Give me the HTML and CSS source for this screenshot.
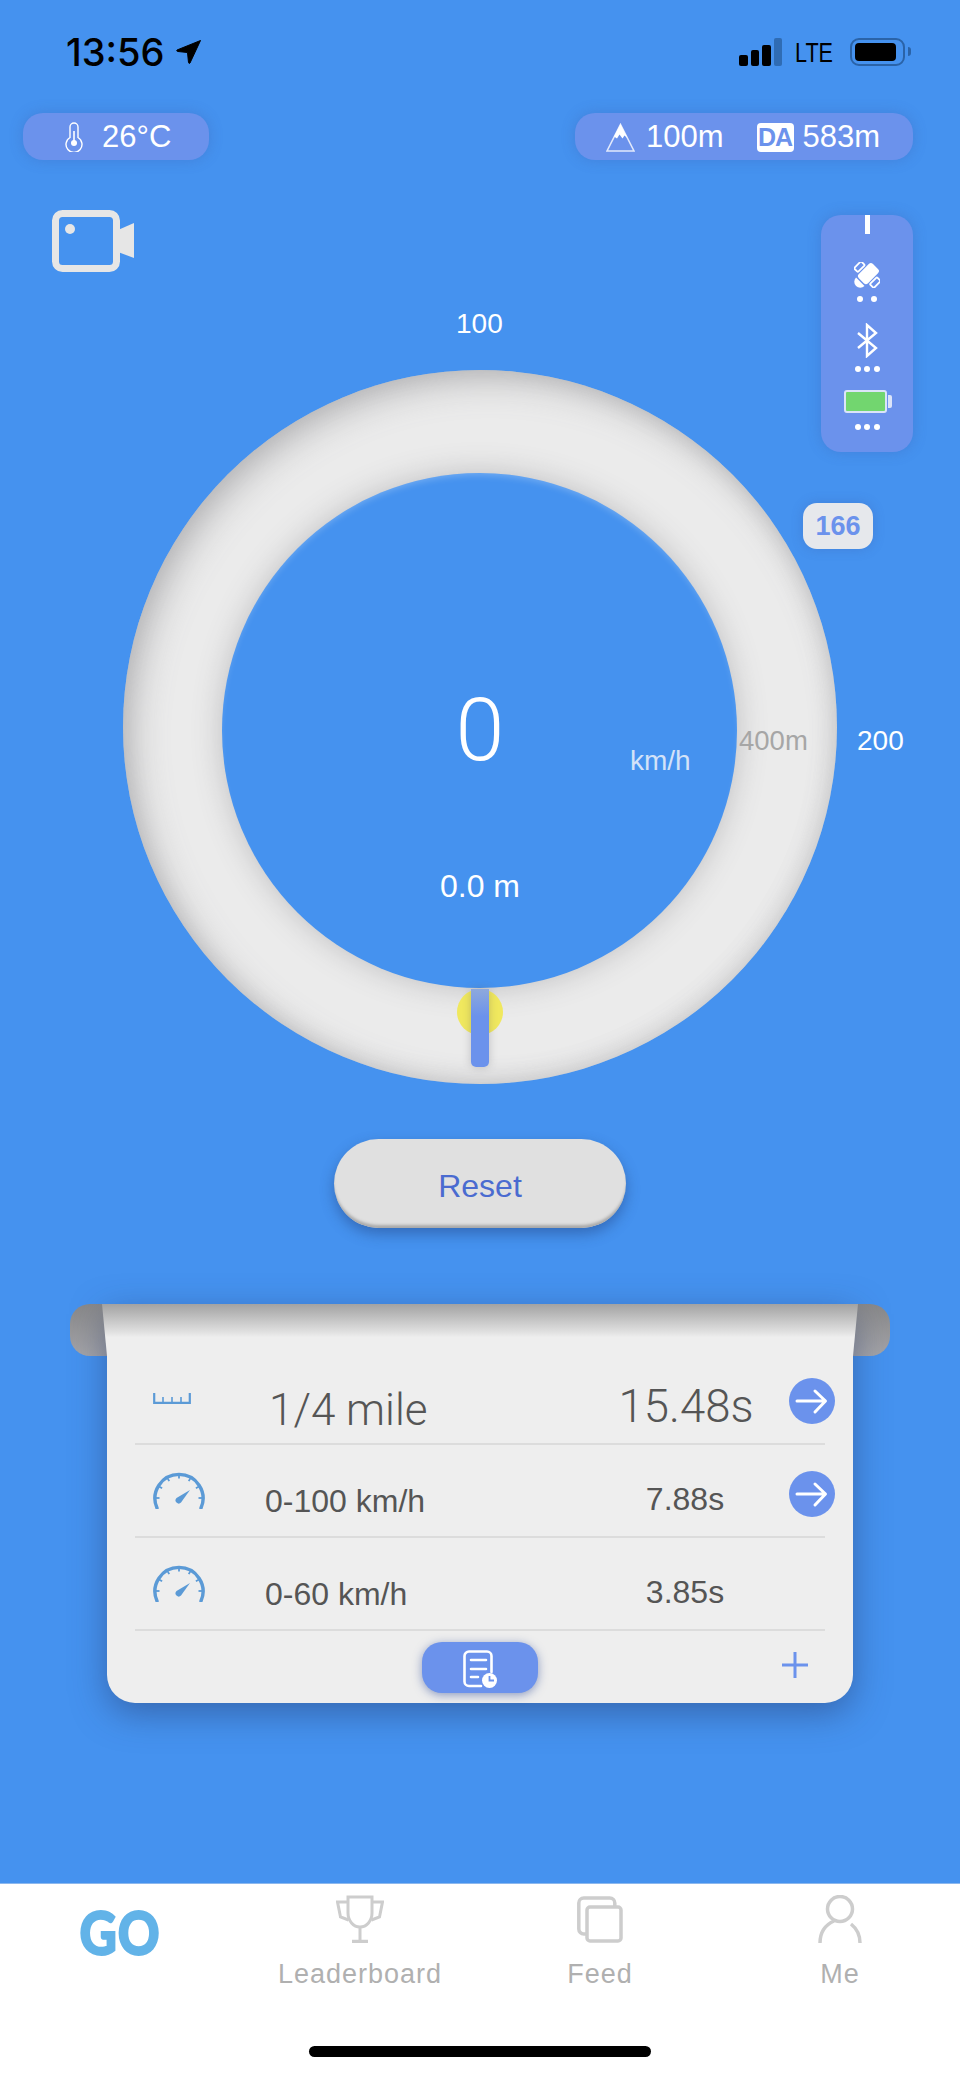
FILE: index.html
```html
<!DOCTYPE html>
<html lang="en">
<head>
    <meta charset="UTF-8">
    <meta name="viewport" content="width=device-width, initial-scale=1.0">
    <title>Dragy</title>
    <link rel="stylesheet" href="styles.css">
</head>
<body>
    <div class="screen">
        <!-- status bar -->
        <div class="status">
            <span class="time">13:56</span>
            <svg class="loc" viewBox="0 0 25 24"><path d="M24.5 .5 L1 10 Q0 11 2 11.5 L11.5 12.5 L12.5 22.5 Q13 24 14 23 Z" stroke="#000" stroke-width="1" stroke-linejoin="round"/></svg>
            <div class="status-right">
                <div class="signal">
                    <i class="bar-1"></i><i class="bar-2"></i><i class="bar-3"></i><i class="bar-4"></i>
                </div>
                <span class="lte">LTE</span>
                <div class="phone-batt"><div class="phone-batt-fill"></div></div>
                <div class="phone-batt-nub"></div>
            </div>
        </div>

        <!-- weather and altitude -->
        <div class="pills">
            <div class="pill pill-temp">
                <svg class="ico-temp" viewBox="0 0 18 30" fill="none" stroke="#fff" stroke-width="1.4"><path d="M5 15.5 V5 a4 4 0 0 1 8 0 V15.5 a8 8 0 1 1 -8 0 Z"/><path d="M9 9 V21" stroke-width="1.6"/><circle cx="9" cy="21" r="3" fill="#fff" stroke="none"/></svg>
                <span>26°C</span>
            </div>
            <div class="pill pill-alt">
                <svg class="ico-mount" viewBox="0 0 29 29"><path d="M14.5 1.5 L28 28 H1 Z" fill="none" stroke="#e2e9fb" stroke-width="1.6"/><path d="M14.5 1 L21.5 15 L18.5 12.5 L16.5 15.5 L13.5 11.5 L11 15.5 L8 13.5 Z" fill="#fff"/></svg>
                <span>100m</span>
                <span class="da">DA</span>
                <span class="da-value">583m</span>
            </div>
        </div>

        <!-- gauge -->
        <div class="stage">
            <svg class="camera" viewBox="0 0 82 62"><rect x="3.5" y="3.5" width="61" height="55" rx="7" fill="none" stroke="#e6e6e6" stroke-width="7"/><circle cx="18" cy="19" r="5" fill="#e6e6e6"/><path d="M66 20 L82 13 V48 L66 42 Z" fill="#e6e6e6"/></svg>

            <div class="sensors">
                <div class="sensor-tick"></div>
                <svg class="ico-sat" viewBox="0 0 26 26"><g transform="rotate(-45 13 13)"><rect x="5" y="6.5" width="20" height="13" rx="3" fill="#fff"/><rect x="8.5" y="-1" width="10" height="5.5" rx="1" fill="none" stroke="#fff" stroke-width="1.8"/><rect x="8.5" y="21.5" width="10" height="5.5" rx="1" fill="none" stroke="#fff" stroke-width="1.8"/><path d="M3.5 7 V19 A6 6 0 0 1 3.5 7 Z" fill="#fff"/></g></svg>
                <div class="dots dots-2"><i></i><i></i></div>
                <svg class="ico-bt" viewBox="0 0 21 35" fill="none" stroke="#fff" stroke-width="2.4"><path d="M1 10 L19 25 L10 33 V2 L19 10 L1 25"/></svg>
                <div class="dots dots-bt"><i></i><i></i><i></i></div>
                <div class="sensor-batt"></div>
                <div class="dots dots-batt"><i></i><i></i><i></i></div>
            </div>

            <div class="badge">166</div>
            <span class="tick tick-100">100</span>
            <span class="tick tick-200">200</span>

            <div class="ring">
                <div class="ring-hole"></div>
                <div class="dot"></div>
                <div class="needle"></div>
                <span class="speed">0</span>
                <span class="unit">km/h</span>
                <span class="dist">0.0 m</span>
                <span class="goal">400m</span>
            </div>
        </div>

        <button class="reset">Reset</button>

        <!-- results card -->
        <div class="card">
            <div class="flap flap-left"></div>
            <div class="flap flap-right"></div>
            <div class="fold"></div>

            <div class="row row-main">
                <svg class="ico-ruler" viewBox="0 0 38 11" fill="none" stroke="#5b9ad6"><path d="M1.2 0 V9.8 H36.8 V0" stroke-width="2.2"/><path d="M10 4 V9 M19 4 V9 M28 4 V9" stroke-width="1.6"/></svg>
                <div class="label">1/4 mile</div>
                <div class="value">15.48s</div>
                <div class="go-btn"><svg viewBox="0 0 46 46" fill="none" stroke="#fff" stroke-width="3" stroke-linecap="round" stroke-linejoin="round"><path d="M8 23 H36 M26 13 L36.5 23 L26 34"/></svg></div>
            </div>
            <div class="row">
                <svg class="ico-gauge" viewBox="0 0 52 37"><use href="#gauge"/></svg>
                <div class="label">0-100 km/h</div>
                <div class="value">7.88s</div>
                <div class="go-btn"><svg viewBox="0 0 46 46" fill="none" stroke="#fff" stroke-width="3" stroke-linecap="round" stroke-linejoin="round"><path d="M8 23 H36 M26 13 L36.5 23 L26 34"/></svg></div>
            </div>
            <div class="row">
                <svg class="ico-gauge" viewBox="0 0 52 37">
                    <g id="gauge" fill="none" stroke="#5b9ad6">
                        <path d="M4 36 A24 24 0 1 1 48 36" stroke-width="3.4" stroke-linecap="round"/>
                        <g stroke-width="1.8">
                            <path d="M26 3 V6.5" transform="rotate(-90 26 26)"/>
                            <path d="M26 3 V6.5" transform="rotate(-60 26 26)"/>
                            <path d="M26 3 V6.5" transform="rotate(-30 26 26)"/>
                            <path d="M26 3 V6.5"/>
                            <path d="M26 3 V6.5" transform="rotate(30 26 26)"/>
                            <path d="M26 3 V6.5" transform="rotate(60 26 26)"/>
                            <path d="M26 3 V6.5" transform="rotate(90 26 26)"/>
                        </g>
                        <path d="M37 18 L28 30.5 A3 3 0 0 1 23.5 26 Z" fill="#5b9ad6" stroke="none"/>
                    </g>
                </svg>
                <div class="label">0-60 km/h</div>
                <div class="value">3.85s</div>
            </div>

            <div class="card-foot">
                <button class="history">
                    <svg viewBox="0 0 34 38" fill="none" stroke="#fff" stroke-width="2.6" stroke-linecap="round"><path d="M18 36 H6 a4.5 4.5 0 0 1 -4.5 -4.5 V6 a4.5 4.5 0 0 1 4.5 -4.5 H24 a4.5 4.5 0 0 1 4.5 4.5 V22"/><path d="M8 10 H23 M8 19 H23 M8 27 H15"/><circle cx="26.5" cy="30.5" r="7.5" fill="#fff" stroke="none"/><path d="M26.5 26 V30.5 H31" stroke="#6b92ec" stroke-width="1.8" stroke-linecap="butt"/></svg>
                </button>
                <svg class="plus" viewBox="0 0 26 26" fill="none" stroke="#6b92ec" stroke-width="3"><path d="M13 0 V26 M0 13 H26"/></svg>
            </div>
        </div>

        <!-- tab bar -->
        <div class="tabbar">
            <div class="tabs">
                <div class="tab tab-go"><span class="go">GO</span></div>
                <div class="tab">
                    <svg viewBox="0 0 48 48" fill="none" stroke="#cdcdcd" stroke-width="3"><path d="M12 2 H36 V18 a12 14 0 0 1 -24 0 Z"/><path d="M12 7 H1.5 L4.5 22 L12.5 25 M36 7 H46.5 L43.5 22 L35.5 25"/><path d="M24 32 V46"/><path d="M16 46.5 H32" stroke-width="3.5"/></svg>
                    <span>Leaderboard</span>
                </div>
                <div class="tab">
                    <svg viewBox="0 0 46 48" fill="none" stroke="#cdcdcd" stroke-width="3.5"><rect x="1.8" y="3" width="36" height="36" rx="5"/><rect x="10" y="12" width="34" height="34" rx="3" fill="#fff"/></svg>
                    <span>Feed</span>
                </div>
                <div class="tab">
                    <svg viewBox="0 0 44 48" fill="none" stroke="#cdcdcd" stroke-width="3.5"><circle cx="22" cy="14" r="12.5"/><path d="M16 26 C7 30 2 38 2 48 M33 29 C38 33 42 40 42 48"/></svg>
                    <span>Me</span>
                </div>
            </div>
            <div class="home-bar"></div>
        </div>
    </div>
</body>
</html>
```

FILE: styles.css
```css
* {
    margin: 0;
    padding: 0;
    box-sizing: border-box;
}

body {
    font-family: "Liberation Sans", Arial, sans-serif;
    background: #4592ef;
}

.screen {
    width: 960px;
    height: 2076px;
    display: flex;
    flex-direction: column;
    background: #4592ef;
    color: #fff;
    overflow: hidden;
    isolation: isolate;
}

/* status bar */
.status {
    display: flex;
    align-items: flex-start;
    height: 66px;
    padding: 38px 49px 0 66px;
    color: #000;
}

.time {
    font-family: Inter, sans-serif;
    font-size: 38px;
    font-weight: 500;
    line-height: 28px;
}

.loc {
    width: 25px;
    height: 24px;
    margin: 2px 0 0 11px;
}

.status-right {
    display: flex;
    align-items: flex-start;
    margin-left: auto;
}

.signal {
    display: flex;
    align-items: flex-end;
    gap: 3px;
    height: 28px;
    margin-right: 13px;
}

.signal i {
    display: block;
    width: 8.5px;
    background: #000;
    border-radius: 2px;
}

.bar-1 { height: 11px; }
.bar-2 { height: 16px; }
.bar-3 { height: 21px; }
.signal .bar-4 { height: 28px; background: #2f6cb4; }

.lte {
    display: block;
    width: 41px;
    margin: 1px 14px 0 0;
    font-size: 27px;
    line-height: 28px;
    transform: scaleX(.8);
    transform-origin: left;
}

.phone-batt {
    width: 55px;
    height: 28px;
    border: 2px solid #2a63a8;
    border-radius: 9px;
    padding: 3px;
}

.phone-batt-fill {
    width: 41px;
    height: 18px;
    background: #000;
    border-radius: 4px;
}

.phone-batt-nub {
    width: 3px;
    height: 9px;
    margin: 9px 0 0 3px;
    background: #2a63a8;
    border-radius: 0 3px 3px 0;
}

/* pills */
.pills {
    display: flex;
    justify-content: space-between;
    margin-top: 47px;
    padding: 0 47px 0 23px;
}

.pill {
    display: flex;
    align-items: center;
    height: 47px;
    padding-top: 1px;
    background: #6b92ec;
    border-radius: 20px;
    box-shadow: 0 0 14px rgba(60, 90, 170, .3);
    font-size: 31px;
}

.pill-temp {
    width: 186px;
    padding-left: 42px;
    gap: 19px;
}

.pill-alt {
    width: 338px;
    padding-left: 31px;
}

.ico-temp {
    width: 18px;
    height: 30px;
}

.ico-mount {
    width: 29px;
    height: 29px;
    margin-right: 11px;
}

.da {
    width: 37px;
    height: 29px;
    margin-left: 33px;
    background: #fff;
    color: #6b92ec;
    border-radius: 4px;
    font-size: 25px;
    font-weight: bold;
    line-height: 29px;
    letter-spacing: -1px;
    text-align: center;
}

.da-value {
    margin-left: 9px;
}

/* gauge */
.stage {
    position: relative;
    height: 924px;
    padding-top: 210px;
}

.camera {
    position: absolute;
    left: 52px;
    top: 50px;
    width: 82px;
    height: 62px;
}

.sensors {
    position: absolute;
    right: 47px;
    top: 55px;
    z-index: 2;
    width: 92px;
    height: 237px;
    display: flex;
    flex-direction: column;
    align-items: center;
    background: #6b92ec;
    border-radius: 20px;
    box-shadow: 0 0 14px rgba(60, 90, 170, .3);
}

.sensor-tick {
    width: 5px;
    height: 19px;
    background: #fff;
}

.ico-sat {
    width: 26px;
    height: 26px;
    margin-top: 28px;
}

.ico-bt {
    width: 21px;
    height: 35px;
    margin-top: 21px;
}

.dots {
    display: flex;
    gap: 3.5px;
}

.dots i {
    display: block;
    width: 6px;
    height: 6px;
    background: #fff;
    border-radius: 50%;
}

.dots-2 {
    gap: 8px;
    margin-top: 8px;
}

.dots-bt {
    margin-top: 8px;
}

.dots-batt {
    margin-top: 11px;
}

.sensor-batt {
    position: relative;
    width: 43px;
    height: 23px;
    margin-top: 18px;
    left: -2px;
    background: #72d66f;
    border: 2px solid #dbe4f9;
    border-radius: 3px;
}

.sensor-batt::after {
    content: "";
    position: absolute;
    right: -7px;
    top: 3px;
    width: 4px;
    height: 13px;
    background: #dbe4f9;
    border-radius: 0 2px 2px 0;
}

.badge {
    position: absolute;
    left: 803px;
    top: 343px;
    z-index: 2;
    width: 70px;
    height: 46px;
    background: #e6e8ec;
    color: #6b92ec;
    border-radius: 14px;
    box-shadow: 0 0 12px rgba(60, 90, 170, .3);
    font-size: 27px;
    font-weight: bold;
    line-height: 46px;
    text-align: center;
}

.tick {
    position: absolute;
    font-size: 28px;
    line-height: 30px;
}

.tick-100 {
    left: 456px;
    top: 149px;
}

.tick-200 {
    left: 857px;
    top: 566px;
}

.ring {
    position: relative;
    width: 714px;
    height: 714px;
    margin: 0 auto;
    border-radius: 50%;
    background: #ebebeb;
    box-shadow: inset 10px 10px 34px rgba(120, 120, 125, .42), inset -3px -3px 22px rgba(120, 120, 125, .2);
}

.ring-hole {
    position: absolute;
    left: 99px;
    top: 103px;
    width: 515px;
    height: 515px;
    border-radius: 50%;
    background: #4592ef;
    box-shadow: 0 0 30px rgba(90, 90, 95, .3), inset 0 5px 7px -3px rgba(255, 255, 255, .25);
}

.dot {
    position: absolute;
    left: 334px;
    top: 619px;
    width: 46px;
    height: 46px;
    border-radius: 50%;
    background: #f0e85e;
}

.needle {
    position: absolute;
    left: 348px;
    top: 619px;
    width: 18px;
    height: 78px;
    border-radius: 0 0 5px 5px;
    background: linear-gradient(#8ea9dc, #6b92ec 35%);
    box-shadow: 0 0 8px rgba(90, 90, 95, .3);
}

.speed {
    position: absolute;
    left: 0;
    right: 0;
    top: 310px;
    font-size: 88px;
    font-family: Roboto, sans-serif;
    font-weight: 300;
    line-height: 100px;
    text-align: center;
}

.unit {
    position: absolute;
    left: 507px;
    top: 376px;
    color: #d3e2f8;
    font-size: 28px;
    line-height: 30px;
}

.dist {
    position: absolute;
    left: 0;
    right: 0;
    top: 498px;
    font-size: 32px;
    line-height: 36px;
    text-align: center;
}

.goal {
    position: absolute;
    left: 616px;
    top: 356px;
    color: #a6a6a6;
    font-size: 27.5px;
    line-height: 30px;
}

/* reset */
.reset {
    align-self: center;
    width: 292px;
    height: 89px;
    margin-top: 55px;
    padding-top: 5px;
    border: none;
    border-radius: 45px;
    background: #e0e0e0;
    color: #4a6bd0;
    font-family: inherit;
    font-size: 32px;
    box-shadow: inset 0 -4px 3px -1px #a9a9a9, 0 6px 14px rgba(30, 60, 120, .45);
}

/* results card */
.card {
    position: relative;
    width: 746px;
    height: 399px;
    margin: 76px auto 0;
    padding: 48px 28px 0;
    background: #eeeeee;
    border-radius: 0 0 28px 28px;
    box-shadow: 0 10px 34px rgba(40, 60, 110, .5);
    color: #555;
}

.flap {
    position: absolute;
    top: 0;
    width: 45px;
    height: 52px;
    background: linear-gradient(#888889, #a4a4a8);
    z-index: -1;
}

.flap-left {
    left: -37px;
    border-radius: 20px 0 0 20px;
}

.flap-right {
    right: -37px;
    border-radius: 0 20px 20px 0;
}

.fold {
    position: absolute;
    left: -5px;
    right: -5px;
    top: 0;
    height: 52px;
    background: linear-gradient(#a2a2a2, #dedede 52%, #eeeeee 64%);
    clip-path: polygon(0 0, 100% 0, calc(100% - 5px) 100%, 5px 100%);
}

.row {
    position: relative;
    display: grid;
    grid-template-columns: 130px 1fr 172px 54px;
    align-items: start;
    height: 93px;
    border-bottom: 2px solid #dcdcdc;
    font-size: 32px;
    line-height: 36px;
}

.label {
    margin-top: 38px;
}

.value {
    margin-top: 36px;
    text-align: center;
}

.row-main {
    font-family: Roboto, sans-serif;
    font-weight: 300;
}

.row-main .label {
    margin: 33px 0 0 4px;
    font-size: 44px;
    line-height: 50px;
}

.row-main .value {
    margin: 30px 0 0 2px;
    font-size: 45.5px;
    line-height: 50px;
}

.ico-ruler {
    width: 38px;
    height: 11px;
    margin: 41px 0 0 18px;
}

.ico-gauge {
    width: 52px;
    height: 37px;
    margin: 27px 0 0 18px;
}

.go-btn {
    width: 46px;
    height: 46px;
    justify-self: end;
    margin: 26px -10px 0 0;
    background: #6b92ec;
    border-radius: 50%;
}

.card-foot {
    display: grid;
    grid-template-columns: 1fr auto 1fr;
    align-items: start;
    padding-top: 11px;
}

.history {
    grid-column: 2;
    width: 116px;
    height: 51px;
    border: none;
    border-radius: 20px;
    background: #6b92ec;
    box-shadow: 0 2px 10px rgba(40, 70, 150, .5);
    padding-top: 5px;
}

.history svg {
    width: 34px;
    height: 38px;
}

.plus {
    justify-self: end;
    width: 26px;
    height: 26px;
    margin: 10px 17px 0 0;
}

/* tab bar */
.tabbar {
    margin-top: auto;
    height: 193px;
    background: #fff;
    border-top: 1px solid #8cb8ee;
}

.tabs {
    display: grid;
    grid-template-columns: repeat(4, 1fr);
    height: 105px;
}

.tab {
    display: flex;
    flex-direction: column;
    align-items: center;
    padding-top: 11px;
    color: #b0b0b0;
    font-size: 27px;
    letter-spacing: 1px;
    line-height: 30px;
}

.tab svg {
    width: 48px;
    height: 48px;
    margin-bottom: 16px;
}

.go {
    margin-top: -5px;
    font-family: Lato, sans-serif;
    font-size: 60px;
    font-weight: 900;
    line-height: 84px;
    letter-spacing: 1px;
    color: #62b3e8;
    -webkit-text-stroke: 2px #62b3e8;
    transform: scaleX(.86);
}

.home-bar {
    width: 342px;
    height: 11px;
    margin: 57px auto 0;
    background: #000;
    border-radius: 6px;
}
```
